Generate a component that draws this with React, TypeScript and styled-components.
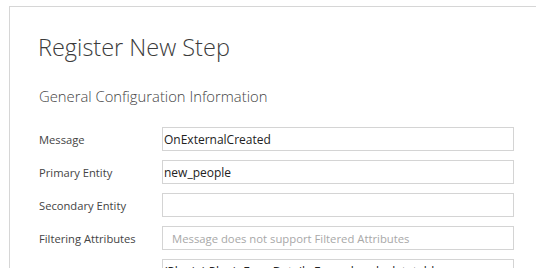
import styled, { createGlobalStyle } from "styled-components";

const GlobalStyle = createGlobalStyle`
  html, body {
    margin: 0;
    padding: 0;
    background: #ffffff;
    overflow: hidden;
  }
  body {
    font-family: "Open Sans", "Noto Sans", sans-serif;
    color: #333333;
  }
`;

const Dialog = styled.div`
  margin: 6px 0 0 9px;
  width: 620px;
  height: 400px;
  border: 1px solid #d6d6d6;
  padding: 24px 0 0 28px;
  box-sizing: border-box;
`;

const Title = styled.h1`
  margin: 0;
  font-size: 23.5px;
  font-weight: 300;
  line-height: 32px;
  color: #3b3b3b;
`;

const SectionHeading = styled.h2`
  margin: 23px 0 0 1px;
  font-size: 14.8px;
  font-weight: 300;
  line-height: 20px;
  color: #444444;
`;

const Form = styled.div`
  display: grid;
  grid-template-columns: 123px 352px;
  row-gap: 9px;
  margin-top: 21px;
  margin-left: 1px;
`;

const Label = styled.div`
  font-size: 11.2px;
  color: #444444;
  display: flex;
  align-items: center;
  height: 24px;
`;

const Field = styled.div<{ $placeholder?: boolean }>`
  height: 24px;
  box-sizing: border-box;
  border: 1px solid #d4d4d4;
  display: flex;
  align-items: center;
  padding: 0 ${(p) => (p.$placeholder ? "9px" : "1px")};
  font-size: ${(p) => (p.$placeholder ? "11.3px" : "12px")};
  color: ${(p) => (p.$placeholder ? "#a8a8a8" : "#222222")};
  white-space: nowrap;
  overflow: hidden;
`;

const rows: { label: string; value: string; placeholder?: boolean }[] = [
  { label: "Message", value: "OnExternalCreated" },
  { label: "Primary Entity", value: "new_people" },
  { label: "Secondary Entity", value: "" },
  {
    label: "Filtering Attributes",
    value: "Message does not support Filtered Attributes",
    placeholder: true,
  },
  { label: "Event Handler", value: "(Plugin) PluginFormDetails.Formula.calculatetable" },
];

export default function App() {
  return (
    <>
      <GlobalStyle />
      <Dialog>
        <Title>Register New Step</Title>
        <SectionHeading>General Configuration Information</SectionHeading>
        <Form>
          {rows.map((r) => [
            <Label key={r.label + "-l"}>{r.label}</Label>,
            <Field key={r.label + "-f"} $placeholder={r.placeholder}>
              {r.value}
            </Field>,
          ])}
        </Form>
      </Dialog>
    </>
  );
}
